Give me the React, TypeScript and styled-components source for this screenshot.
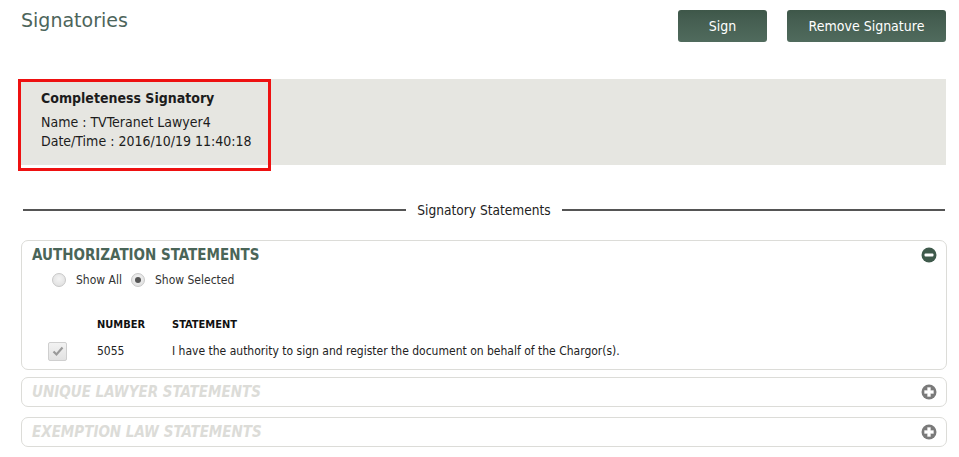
import * as React from 'react';
import styled, { createGlobalStyle } from 'styled-components';

const GlobalStyle = createGlobalStyle`
  html, body {
    margin: 0;
    padding: 0;
    background: #fff;
  }
  body {
    font-family: 'DejaVu Sans Condensed', 'DejaVu Sans', Verdana, sans-serif;
    color: #222;
  }
`;

const Page = styled.div`
  width: 959px;
  padding: 0 12px 0 21px;
  box-sizing: border-box;
`;

const TopBar = styled.div`
  display: flex;
  align-items: flex-start;
  justify-content: space-between;
  padding-top: 8px;
  height: 79px;
  box-sizing: border-box;
`;

const Title = styled.h1`
  margin: 0;
  font-family: 'DejaVu Sans', Verdana, sans-serif;
  font-size: 19px;
  font-weight: normal;
  color: #4d655b;
  line-height: 24px;
`;

const Actions = styled.div`
  display: flex;
  gap: 20px;
  padding-top: 2px;
  margin-right: 1px;
`;

const ActionButton = styled.button<{ $width: number }>`
  width: ${(p) => p.$width}px;
  height: 32px;
  border: none;
  border-radius: 3px;
  background: linear-gradient(to bottom, #3e5749 0%, #465f52 35%, #506b5d 100%);
  color: #fff;
  font-family: inherit;
  font-size: 14px;
  cursor: pointer;
`;

const SignaturePanel = styled.div`
  display: flex;
  background: #e6e6e1;
  height: 86px;
  margin-right: 1px;
`;

const SignatureCard = styled.div`
  margin-left: -3px;
  margin-bottom: -6px;
  width: 253px;
  height: 92px;
  box-sizing: border-box;
  border: 3px solid #ee1111;
  padding: 7px 0 0 20px;
  font-size: 14px;
  line-height: 19px;
  color: #1c1c1c;
`;

const CardTitle = styled.div`
  font-weight: bold;
  margin-bottom: 5px;
`;

const Divider = styled.div`
  display: flex;
  align-items: center;
  gap: 11px;
  margin: 37px 2px 0 2px;
  font-size: 13.6px;
  color: #222;
  &::before,
  &::after {
    content: '';
    flex: 1;
    height: 2px;
    background: #555;
  }
`;

const Section = styled.div<{ $open?: boolean; $gap: number }>`
  border: 1px solid #dcdcd8;
  border-radius: 7px;
  margin-top: ${(p) => p.$gap}px;
  padding: 0 0 ${(p) => (p.$open ? '7px' : '0')} 0;
`;

const SectionHead = styled.div<{ $open?: boolean }>`
  display: flex;
  align-items: center;
  justify-content: space-between;
  height: 28px;
  padding: 0 9px 0 10px;
  font-size: 15px;
  font-weight: bold;
  font-style: ${(p) => (p.$open ? 'normal' : 'italic')};
  color: ${(p) => (p.$open ? '#4a6558' : '#dcdcd8')};
`;

const RadioRow = styled.div`
  display: flex;
  align-items: center;
  padding-left: 30px;
  height: 22px;
  font-size: 12px;
  color: #333;
`;

const RadioItem = styled.label`
  display: flex;
  align-items: center;
  gap: 10px;
  margin-right: 9px;
`;

const RadioDot = styled.span<{ $checked?: boolean }>`
  width: 14px;
  height: 14px;
  border-radius: 50%;
  box-sizing: border-box;
  border: 1px solid #c8c8c8;
  background: radial-gradient(circle at 50% 40%, #f4f4f4, #dcdcdc);
  display: flex;
  align-items: center;
  justify-content: center;
  &::after {
    content: '';
    display: ${(p) => (p.$checked ? 'block' : 'none')};
    width: 6px;
    height: 6px;
    border-radius: 50%;
    background: #555;
  }
`;

const Table = styled.div`
  margin-top: 25px;
  display: grid;
  grid-template-columns: 75px 75px 1fr;
  grid-template-rows: 24px 22px;
  font-size: 12px;
  color: #222;
`;

const HeadCell = styled.div`
  font-size: 11px;
  font-weight: bold;
  color: #111;
  line-height: 18px;
`;

const Cell = styled.div`
  display: flex;
  align-items: center;
`;

const CheckCell = styled(Cell)`
  padding-left: 26px;
`;

const CheckBox = styled.span`
  width: 19px;
  height: 19px;
  box-sizing: border-box;
  border: 1px solid #cfcfcf;
  border-radius: 2px;
  background: linear-gradient(#f2f2f2, #e2e2e2);
  display: flex;
  align-items: center;
  justify-content: center;
`;

function ToggleIcon({ open }: { open?: boolean }) {
  const fill = open ? '#3f5a4c' : '#7a7a7a';
  return (
    <svg width="16" height="16" viewBox="0 0 16 16">
      <circle cx="8" cy="8" r="7.5" fill={fill} />
      {open ? (
        <rect x="3.5" y="6.5" width="9" height="3" rx="1" fill="#fff" />
      ) : (
        <path
          d="M6.5 3.5h3v3h3v3h-3v3h-3v-3h-3v-3h3z"
          fill="#fff"
          stroke="#fff"
          strokeWidth="0.3"
          strokeLinejoin="round"
        />
      )}
    </svg>
  );
}

function App() {
  return (
    <Page>
      <GlobalStyle />
      <TopBar>
        <Title>Signatories</Title>
        <Actions>
          <ActionButton $width={89}>Sign</ActionButton>
          <ActionButton $width={159}>Remove Signature</ActionButton>
        </Actions>
      </TopBar>

      <SignaturePanel>
        <SignatureCard>
          <CardTitle>Completeness Signatory</CardTitle>
          <div>Name : TVTeranet Lawyer4</div>
          <div>Date/Time : 2016/10/19 11:40:18</div>
        </SignatureCard>
      </SignaturePanel>

      <Divider>Signatory Statements</Divider>

      <Section $open $gap={22}>
        <SectionHead $open>
          AUTHORIZATION STATEMENTS
          <ToggleIcon open />
        </SectionHead>
        <RadioRow>
          <RadioItem>
            <RadioDot />
            Show All
          </RadioItem>
          <RadioItem>
            <RadioDot $checked />
            Show Selected
          </RadioItem>
        </RadioRow>
        <Table>
          <HeadCell />
          <HeadCell>NUMBER</HeadCell>
          <HeadCell>STATEMENT</HeadCell>
          <CheckCell>
            <CheckBox>
              <svg width="12" height="12" viewBox="0 0 12 12">
                <path d="M1.5 6.5l3 3 6-7" fill="none" stroke="#9a9a9a" strokeWidth="2.2" />
              </svg>
            </CheckBox>
          </CheckCell>
          <Cell>5055</Cell>
          <Cell>I have the authority to sign and register the document on behalf of the Chargor(s).</Cell>
        </Table>
      </Section>

      <Section $gap={7}>
        <SectionHead>
          UNIQUE LAWYER STATEMENTS
          <ToggleIcon />
        </SectionHead>
      </Section>

      <Section $gap={10}>
        <SectionHead>
          EXEMPTION LAW STATEMENTS
          <ToggleIcon />
        </SectionHead>
      </Section>
    </Page>
  );
}

export default App;
